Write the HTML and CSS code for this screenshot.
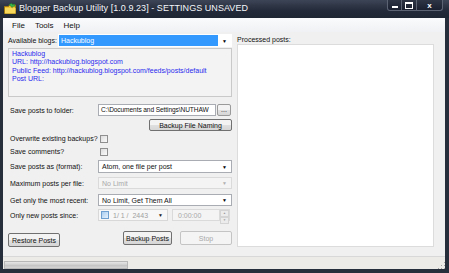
FILE: index.html
```html
<!DOCTYPE html>
<html lang="en">
<head>
  <meta charset="UTF-8" />
  <title>Blogger Backup Utility</title>
  <link rel="stylesheet" href="styles.css">
</head>
<body>
  <div class="window">
    <div class="titlebar">
      <svg class="app-icon" width="12" height="11" viewBox="0 0 12 11">
        <path d="M0.5 3.5h4l1-1.5h6v8.5h-11z" fill="#f2c230" stroke="#a07a10" stroke-width="1"/>
        <path d="M1 5h10.5v5.5H1z" fill="#f7d85a"/>
        <path d="M5 1.5l3 -1.2 0.2 1.3 2.6 -0.3 -0.1 2 -2.6 0.2 0.2 1.2z" fill="#39b54a" stroke="#1d7a2b" stroke-width="0.5"/>
      </svg>
      <span class="title">Blogger Backup Utility [1.0.9.23] - SETTINGS UNSAVED</span>
      <div class="caption-buttons">
        <span class="cap min"><i></i></span>
        <span class="cap max"><i></i></span>
        <span class="cap close">x</span>
      </div>
    </div>

    <div class="client">
      <div class="menubar">
        <span>File</span>
        <span>Tools</span>
        <span>Help</span>
      </div>

      <div class="main">
        <div class="left">
          <div class="row row-blogs">
            <label class="lbl-short">Available blogs:</label>
            <div class="combo selected wide">
              <span>Hackublog</span>
              <span class="arrow">▼</span>
            </div>
          </div>

          <div class="info">
            <div>Hackublog</div>
            <div>URL: http://hackublog.blogspot.com</div>
            <div>Public Feed: http://hackublog.blogspot.com/feeds/posts/default</div>
            <div>Post URL:</div>
          </div>

          <div class="row row-folder">
            <label>Save posts to folder:</label>
            <div class="textbox">C:\Documents and Settings\NUTHAW</div>
            <button class="btn browse">...</button>
          </div>

          <div class="row row-naming">
            <button class="btn naming">Backup File Naming</button>
          </div>

          <div class="row row-check">
            <label>Overwrite existing backups?</label>
            <span class="check"></span>
          </div>

          <div class="row row-check second">
            <label>Save comments?</label>
            <span class="check"></span>
          </div>

          <div class="row row-select r-format">
            <label>Save posts as (format):</label>
            <div class="combo">
              <span>Atom, one file per post</span>
              <span class="arrow">▼</span>
            </div>
          </div>

          <div class="row row-select r-max">
            <label>Maximum posts per file:</label>
            <div class="combo disabled">
              <span>No Limit</span>
              <span class="arrow">▼</span>
            </div>
          </div>

          <div class="row row-select r-recent">
            <label>Get only the most recent:</label>
            <div class="combo">
              <span>No Limit, Get Them All</span>
              <span class="arrow">▼</span>
            </div>
          </div>

          <div class="row row-select r-since">
            <label>Only new posts since:</label>
            <div class="datepick">
              <span class="check blue"></span>
              <span class="date">1/ 1 /&nbsp; 2443</span>
              <span class="arrow dark">▼</span>
            </div>
            <div class="timepick">
              <span>0:00:00</span>
              <span class="spin"><i>▲</i><i>▼</i></span>
            </div>
          </div>

          <div class="row row-actions">
            <button class="btn restore">Restore Posts</button>
            <button class="btn backup">Backup Posts</button>
            <button class="btn stop" disabled>Stop</button>
          </div>
        </div>

        <div class="right">
          <div class="processed-label">Processed posts:</div>
          <div class="processed"></div>
        </div>
      </div>

      <div class="statusbar">
        <div class="progress"></div>
        <div class="grip"></div>
      </div>
    </div>
  </div>
</body>
</html>
```

FILE: styles.css
```css
body {
  margin: 0;
  background: #fff;
  font-family: "Liberation Sans", Arial, sans-serif;
}

.window {
  width: 449px;
  height: 273px;
  background: #262d3b;
  display: flex;
  flex-direction: column;
  box-sizing: border-box;
  padding: 0 4px 4px 3px;
}

.titlebar {
  height: 18px;
  display: flex;
  align-items: flex-start;
  background: linear-gradient(#3c4556, #232a39 60%, #1e2533);
  margin: 0 -4px 0 -3px;
  padding: 0 6px 0 4px;
  color: #fff;
}

.app-icon {
  margin-top: 3px;
}

.title {
  font-size: 9px;
  margin: 3px 0 0 3px;
  letter-spacing: 0.05px;
  color: #f4f6fa;
}

.caption-buttons {
  margin-left: auto;
  display: flex;
}

.cap {
  height: 11px;
  border: 1px solid #5c6474;
  border-top: none;
  background: linear-gradient(#2e3545, #1a2030);
  display: flex;
  align-items: center;
  justify-content: center;
  box-sizing: border-box;
  color: #fff;
  font-size: 8px;
  font-weight: bold;
}

.cap.min { width: 15px; border-radius: 0 0 0 3px; }
.cap.max { width: 15px; border-left: none; }
.cap.close { width: 26px; border-left: none; border-radius: 0 0 3px 0; }

.cap.min i {
  width: 6px;
  height: 2px;
  background: #fff;
  margin-top: 4px;
}

.cap.max i {
  width: 6px;
  height: 4px;
  border: 1px solid #fff;
  border-top-width: 2px;
}

.client {
  flex: 1;
  background: #f0f0f0;
  display: flex;
  flex-direction: column;
  font-size: 7px;
  color: #111;
}

.menubar {
  height: 14px;
  display: flex;
  align-items: center;
  gap: 10px;
  padding-left: 9px;
  font-size: 8px;
  background: linear-gradient(#fafbfc, #f0f1f4);
}

.main {
  flex: 1;
  display: flex;
  padding-left: 5px;
}

.left {
  width: 224px;
  display: flex;
  flex-direction: column;
}

.row {
  display: flex;
  align-items: center;
}

.row label {
  width: 88px;
  padding-left: 2px;
  flex-shrink: 0;
  white-space: nowrap;
}

.row-blogs {
  height: 13px;
  margin-top: 2px;
}

.row-blogs .lbl-short {
  width: 50px;
  padding-left: 0;
}

.combo {
  flex: 1;
  height: 13px;
  box-sizing: border-box;
  border: 1px solid #a9acb3;
  background: #fff;
  display: flex;
  align-items: center;
  padding: 0 4px 0 3px;
}

.combo .arrow {
  margin-left: auto;
  font-size: 5px;
  color: #000;
}

.combo.selected {
  border-color: #fff;
  background: #fff;
  padding-left: 0;
}

.combo.selected span:first-child {
  background: #3399ff;
  color: #fff;
  height: 11px;
  line-height: 11px;
  flex: 1;
  padding-left: 2px;
  margin-right: 4px;
}

.combo.disabled {
  background: #f4f4f4;
  border-color: #dadada;
  color: #a8a8a8;
}

.combo.disabled .arrow {
  color: #b0b0b0;
}

.info {
  height: 49px;
  box-sizing: border-box;
  margin-top: 1px;
  border: 1px solid #c9c9c9;
  background: #f3f3f3;
  color: #2a2aee;
  padding: 1px 3px;
  line-height: 8.4px;
}

.row-folder {
  margin-top: 7px;
  height: 12px;
}

.textbox {
  width: 118px;
  height: 12px;
  box-sizing: border-box;
  border: 1px solid #a9acb3;
  background: #fff;
  padding-left: 2px;
  line-height: 10px;
  font-size: 6.6px;
  letter-spacing: -0.1px;
  white-space: nowrap;
}

.btn {
  font-family: "Liberation Sans", Arial, sans-serif;
  font-size: 7px;
  color: #111;
  border: 1px solid #707070;
  border-radius: 2px;
  background: linear-gradient(#f3f3f3 50%, #e0e0e0 50%, #d6d6d6);
  padding: 0;
  box-sizing: border-box;
}

.btn.browse {
  width: 14px;
  height: 12px;
  line-height: 8px;
  margin-left: 1px;
  border-color: #9a9a9a;
}

.row-naming {
  margin-top: 3px;
  justify-content: flex-end;
}

.btn.naming {
  width: 83px;
  height: 12px;
}

.row-check {
  margin-top: 3px;
  height: 9px;
}

.row-check.second {
  margin-top: 4px;
}

.check {
  width: 8px;
  height: 8px;
  box-sizing: border-box;
  border: 1px solid #8f8f8f;
  background: linear-gradient(135deg, #dcdcdc, #fbfbfb);
  margin-left: 2px;
}

.row-select {
  height: 13px;
}

.r-format { margin-top: 4px; }
.r-max { margin-top: 4px; height: 12px; }
.r-recent { margin-top: 5px; height: 12px; }
.r-since { margin-top: 3px; height: 12px; }

.r-max .combo, .r-recent .combo, .r-since .combo {
  height: 12px;
}

.datepick {
  width: 70px;
  height: 12px;
  box-sizing: border-box;
  border: 1px solid #d8d8d8;
  background: #f7f7f7;
  display: flex;
  align-items: center;
  padding: 0 4px 0 2px;
  color: #a0a0a0;
}

.check.blue {
  margin: 0 4px 0 0;
  border-color: #6f9fd0;
  background: linear-gradient(135deg, #a9cdf0, #e6f2fc);
}

.date {
  font-size: 7px;
}

.arrow.dark {
  margin-left: auto;
  font-size: 5px;
  color: #222;
}

.timepick {
  width: 58px;
  height: 12px;
  margin-left: 4px;
  box-sizing: border-box;
  border: 1px solid #dadada;
  background: #f4f4f4;
  display: flex;
  align-items: center;
  padding-left: 5px;
  color: #a8a8a8;
}

.spin {
  margin-left: auto;
  width: 9px;
  height: 10px;
  display: flex;
  flex-direction: column;
  border-left: 1px solid #dadada;
}

.spin i {
  flex: 1;
  font-style: normal;
  font-size: 3px;
  text-align: center;
  line-height: 5px;
  border: 1px solid #d4d4d4;
  color: #999;
  background: #ececec;
}

.row-actions {
  margin-top: 10px;
  height: 16px;
  align-items: flex-start;
}

.btn.restore {
  width: 52px;
  height: 14px;
  margin-top: 2px;
}

.btn.backup {
  width: 49px;
  height: 14px;
  margin-left: 63px;
}

.btn.stop {
  width: 52px;
  height: 14px;
  margin-left: 8px;
  border-color: #c4c4c4;
  background: #f4f4f4;
  color: #a8a8a8;
}

.right {
  margin-left: 5px;
  width: 197px;
  display: flex;
  flex-direction: column;
}

.processed-label {
  margin-top: 4px;
  height: 8px;
  line-height: 8px;
}

.processed {
  height: 203px;
  box-sizing: border-box;
  border: 1px solid #dcdcdc;
  background: #fff;
}

.statusbar {
  height: 13px;
  border-top: 1px solid #d8d8d8;
  background: #ecebe8;
  display: flex;
  align-items: flex-end;
  padding-left: 1px;
  box-sizing: border-box;
}

.progress {
  width: 124px;
  height: 8px;
  box-sizing: border-box;
  border: 1px solid #b7b7b7;
  background: linear-gradient(#e6e6e6, #cdcdcd 50%, #c2c2c2 50%, #d4d4d4);
}

.grip {
  margin-left: auto;
  width: 8px;
  height: 8px;
  background: radial-gradient(circle, #a0a0a0 0.8px, transparent 1px) 0 0 / 3px 3px;
  clip-path: polygon(100% 0, 100% 100%, 0 100%);
}
```
